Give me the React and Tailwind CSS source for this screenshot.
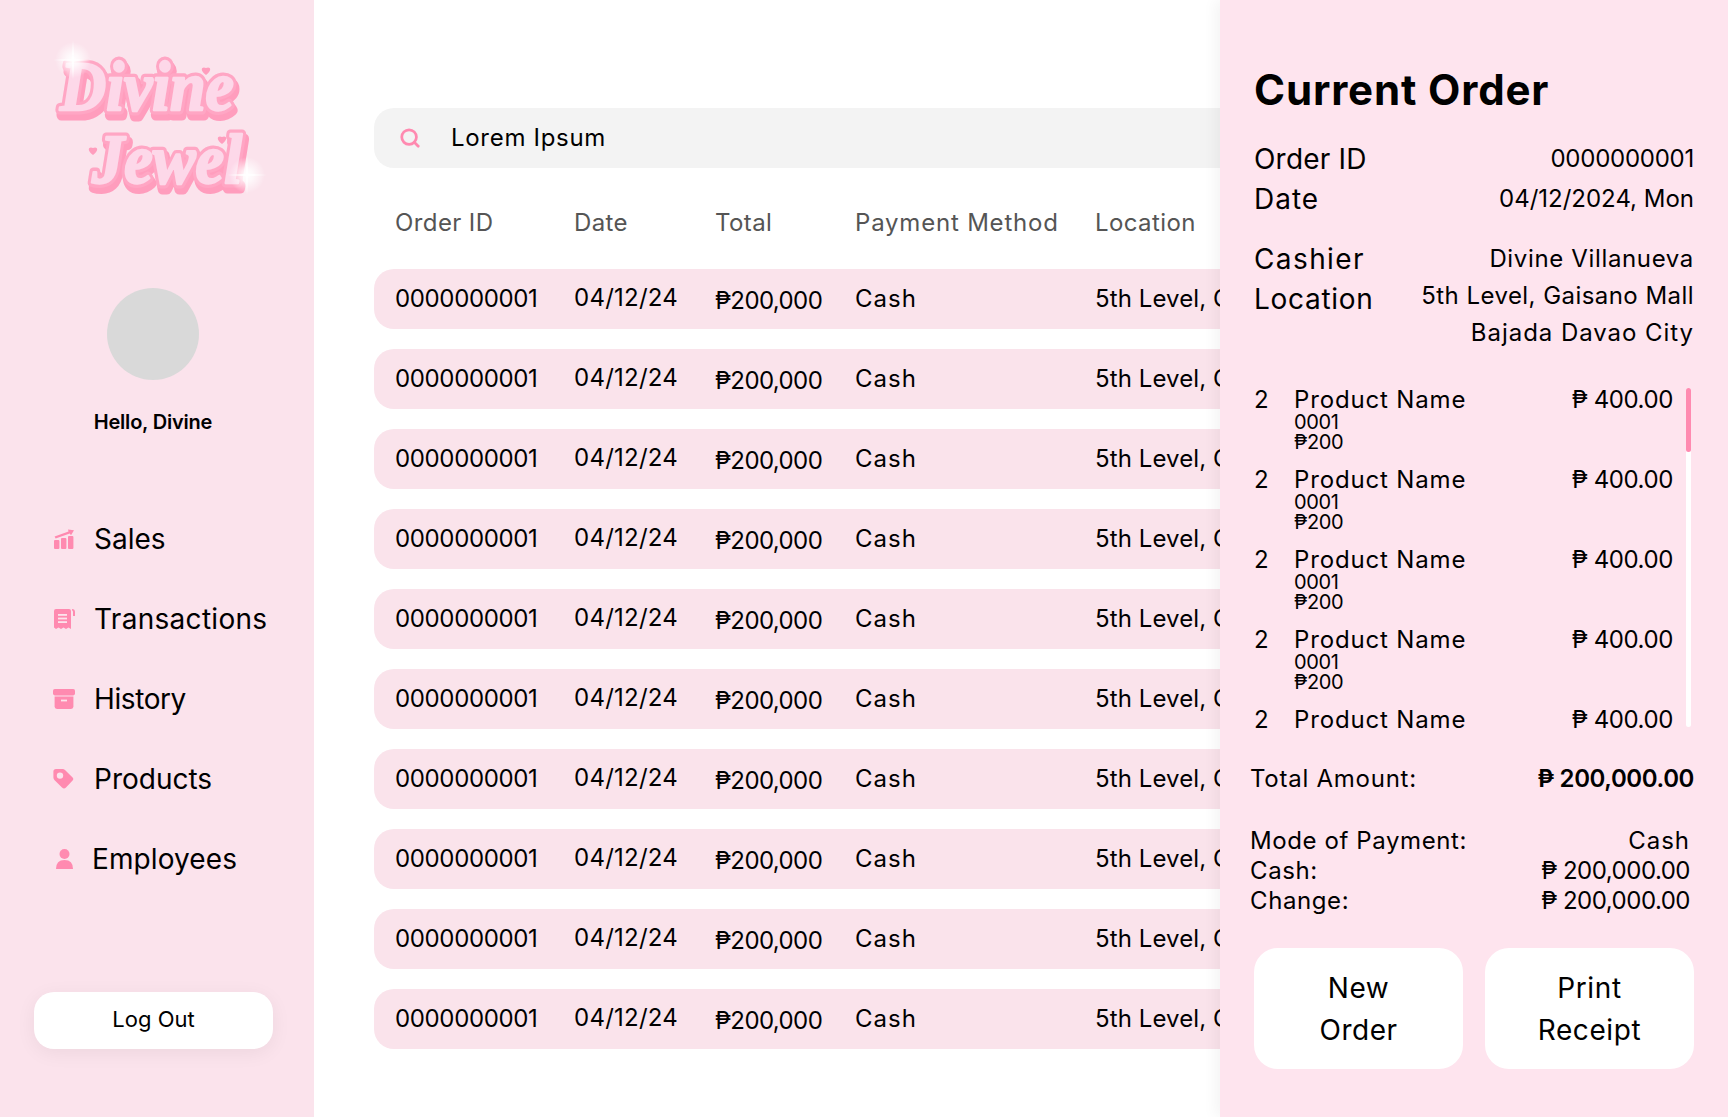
import { Search } from "lucide-react";

const PINK = "#ff8ab0";

function SalesIcon() {
  return (
    <svg width="22" height="20" viewBox="0 0 22 20" fill={PINK}>
      <rect x="1" y="11" width="5.4" height="9" rx="1" />
      <rect x="8" y="9" width="5.4" height="11" rx="1" />
      <rect x="15" y="7" width="5.4" height="13" rx="1" />
      <path d="M1.6 7.6 L15.5 2.6 L15 0.4 L21 1.2 L18 6.2 L16.8 4.4 L2.6 9.6 Z" />
    </svg>
  );
}

function ReceiptIcon() {
  return (
    <svg width="22" height="20" viewBox="0 0 22 20" fill={PINK}>
      <path d="M3 0 H16 Q18 0 18 2 V20 L15.5 18.4 L13 20 L10.5 18.4 L8 20 L5.5 18.4 L3 20 L1 18.6 V2 Q1 0 3 0 Z" />
      <path d="M19 0 Q22 0 22 3 V7 H20 V3 Q20 1.6 19 1.6 Z" />
      <rect x="5" y="5" width="9" height="1.8" fill="#fce4ec" />
      <rect x="5" y="8.6" width="9" height="1.8" fill="#fce4ec" />
      <rect x="5" y="12.2" width="9" height="1.8" fill="#fce4ec" />
    </svg>
  );
}

function ArchiveIcon() {
  return (
    <svg width="22" height="20" viewBox="0 0 22 20" fill={PINK}>
      <rect x="0" y="0" width="22" height="6.4" rx="1.8" />
      <path d="M1.6 7.6 H20.4 V17.6 Q20.4 20 18 20 H4 Q1.6 20 1.6 17.6 Z" />
      <rect x="8" y="10.6" width="6" height="1.8" fill="#fce4ec" />
    </svg>
  );
}

function TagIcon() {
  return (
    <svg width="22" height="20" viewBox="0 0 22 20" fill={PINK}>
      <path
        fillRule="evenodd"
        d="M3 0 H9.6 Q11 0 12 1 L19.6 8.4 Q21 10 19.6 11.6 L13 18.6 Q11 20.4 9 18.6 L1.4 11 Q0.4 10 0.4 8.6 V2.6 Q0.4 0 3 0 Z M7 3.4 A3.2 3.2 0 1 0 7 9.8 A3.2 3.2 0 1 0 7 3.4 Z"
      />
    </svg>
  );
}

function UserIcon() {
  return (
    <svg width="22" height="20" viewBox="0 0 22 20" fill={PINK}>
      <circle cx="11.5" cy="5" r="5" />
      <path d="M3 20 Q3 11 11.5 11 Q20 11 20 20 Z" />
    </svg>
  );
}

function Logo() {
  const word = (text, x, y, len) => (
    <g fontFamily="'Liberation Serif', serif" fontStyle="italic" fontWeight="700" fontSize="70">
      <text x={x + 2} y={y + 5} textLength={len} lengthAdjust="spacingAndGlyphs" fill="#ff9dbd" stroke="#ff9dbd" strokeWidth="11" strokeLinejoin="round">
        {text}
      </text>
      <text x={x} y={y} textLength={len} lengthAdjust="spacingAndGlyphs" fill="#ffa6c4" stroke="#ffa6c4" strokeWidth="9" strokeLinejoin="round">
        {text}
      </text>
      <text x={x} y={y} textLength={len} lengthAdjust="spacingAndGlyphs" fill="#fdd8e9" stroke="#fdd8e9" strokeWidth="2.4" strokeLinejoin="round">
        {text}
      </text>
    </g>
  );
  const heart = (x, y) => (
    <path
      d={`M${x} ${y + 5} C${x - 7} ${y} ${x - 4} ${y - 4} ${x} ${y - 2} C${x + 4} ${y - 4} ${x + 7} ${y} ${x} ${y + 5} Z`}
      fill="#ff9dbd"
    />
  );
  const spark = (x, y) => (
    <g>
      <circle cx={x} cy={y} r="18" fill="url(#glow)" />
      <path d={`M${x} ${y - 20} L${x + 1.2} ${y - 1.2} L${x + 20} ${y} L${x + 1.2} ${y + 1.2} L${x} ${y + 20} L${x - 1.2} ${y + 1.2} L${x - 20} ${y} L${x - 1.2} ${y - 1.2} Z`} fill="#fff" opacity="0.8" />
    </g>
  );
  return (
    <svg width="240" height="170" viewBox="0 0 240 170">
      <defs>
        <radialGradient id="glow">
          <stop offset="0%" stopColor="#fff" />
          <stop offset="35%" stopColor="#fff" stopOpacity="0.75" />
          <stop offset="100%" stopColor="#fff" stopOpacity="0" />
        </radialGradient>
      </defs>
      {word("Divine", 30, 80, 174)}
      {word("Jewel", 62, 153, 150)}
      {heart(176, 40)}
      {heart(192, 109)}
      {heart(63, 120)}
      {spark(43, 30)}
      {spark(217, 145)}
    </svg>
  );
}

const navItems = [
  { label: "Sales", icon: <SalesIcon />, cls: "" },
  { label: "Transactions", icon: <ReceiptIcon />, cls: "tracking-[0.3px]" },
  { label: "History", icon: <ArchiveIcon />, cls: "tracking-[-0.4px]" },
  { label: "Products", icon: <TagIcon />, cls: "" },
  { label: "Employees", icon: <UserIcon />, cls: "-ml-0.5 tracking-[0.1px]" },
];

const rows = Array.from({ length: 10 }, (_, i) => i);
const products = [0, 1, 2, 3, 4];

function Sidebar() {
  return (
    <div className="w-[314px] shrink-0 h-full bg-[#fbe3ec] flex flex-col">
      <div className="pt-[30px] pl-[30px] h-[200px]">
        <Logo />
      </div>
      <div className="w-[306px] mt-[88px] flex flex-col items-center">
        <div className="w-[92px] h-[92px] rounded-full bg-[#d9d9d9]" />
        <p className="mt-[27px] text-[20px] leading-[30px] font-semibold text-black tracking-[-0.2px]">Hello, Divine</p>
      </div>
      <nav className="mt-[82px] pl-[53px] flex flex-col gap-[40px]">
        {navItems.map((item) => (
          <div key={item.label} className="flex items-center gap-[19px] h-[40px]">
            {item.icon}
            <span className={`text-[28px] leading-[40px] text-black ${item.cls}`}>{item.label}</span>
          </div>
        ))}
      </nav>
      <button className="mt-auto mb-[68px] ml-[34px] w-[239px] h-[57px] pb-[2px] rounded-[20px] bg-white text-[22px] text-black shadow-[0_4px_20px_rgba(0,0,0,0.06)]">
        Log Out
      </button>
    </div>
  );
}

function Transactions() {
  return (
    <div className="flex-1 min-w-0 h-full bg-white overflow-hidden pl-[60px] pt-[108px]">
      <div className="w-[1000px] h-[60px] rounded-[20px] bg-[#f3f3f3] flex items-center pl-[25px] gap-[30px]">
        <Search size={22} strokeWidth={3} color={PINK} />
        <span className="text-[24px] text-black tracking-[0.7px]">Lorem Ipsum</span>
      </div>
      <div className="w-[1000px] mt-[35px] h-[40px] pl-[21px] flex items-center text-[24px] text-[#555555] tracking-[0.4px]">
        <span className="w-[179px]">Order ID</span>
        <span className="w-[141px]">Date</span>
        <span className="w-[140px]">Total</span>
        <span className="w-[240px] tracking-[0.8px]">Payment Method</span>
        <span>Location</span>
      </div>
      <div className="mt-[26px] flex flex-col gap-[20px]">
        {rows.map((r) => (
          <div key={r} className="w-[1000px] h-[60px] rounded-[20px] bg-[#fae3eb] pl-[21px] flex items-center text-[24px] text-black whitespace-nowrap">
            <span className="w-[179px] tracking-[-0.35px]">0000000001</span>
            <span className="w-[141px] pb-[2px] tracking-[0.25px]">04/12/24</span>
            <span className="w-[140px] pt-[3px] tracking-[-0.6px]">₱200,000</span>
            <span className="w-[240px] tracking-[1px]">Cash</span>
            <span className="tracking-[0.1px]">5th Level, Gaisano Mall</span>
          </div>
        ))}
      </div>
    </div>
  );
}

function OrderPanel() {
  return (
    <div className="relative w-[508px] shrink-0 h-full bg-[#fee4ee] shadow-[-4px_0_14px_rgba(0,0,0,0.05)] px-[34px] pt-[60px] text-black">
      <h1 className="text-[42px] leading-[60px] font-bold tracking-[0.85px]">Current Order</h1>

      <div className="mt-[19px] flex items-center justify-between h-[40px]">
        <span className="text-[28px] tracking-[0.2px]">Order ID</span>
        <span className="text-[24px] tracking-[-0.25px]">0000000001</span>
      </div>
      <div className="flex items-center justify-between h-[40px]">
        <span className="text-[28px] tracking-[1px]">Date</span>
        <span className="text-[24px]">04/12/2024, Mon</span>
      </div>

      <div className="mt-[20px] flex justify-between">
        <div className="flex flex-col text-[28px] leading-[40px]">
          <span className="tracking-[1.4px]">Cashier</span>
          <span className="tracking-[0.7px]">Location</span>
        </div>
        <div className="text-right text-[24px] leading-[37px] pt-[1px]">
          <p className="tracking-[0.65px]">Divine Villanueva</p>
          <p className="tracking-[0.45px]">5th Level, Gaisano Mall</p>
          <p className="tracking-[0.95px]">Bajada Davao City</p>
        </div>
      </div>

      <div className="mt-[37px] h-[342px] relative overflow-hidden">
        <div className="pr-[21px] flex flex-col gap-[16px]">
          {products.map((p) => (
            <div key={p} className="flex">
              <span className="w-[40px] text-[24px] leading-[24px]">2</span>
              <div className="flex-1">
                <p className="text-[24px] leading-[24px] tracking-[0.85px]">Product Name</p>
                <p className="text-[20px] leading-[20px] tracking-[-0.4px]">0001</p>
                <p className="text-[20px] leading-[20px] tracking-[-0.4px]">₱200</p>
              </div>
              <span className="text-[24px] leading-[24px] tracking-[-0.4px]">₱ 400.00</span>
            </div>
          ))}
        </div>
        <div className="absolute right-[3px] top-0 h-[339px] w-[5px] rounded-full bg-white">
          <div className="w-full h-[64px] rounded-full bg-[#ff8ab0]" />
        </div>
      </div>

      <div className="mt-[34px] -ml-[4px] flex items-center justify-between text-[24px] leading-[30px]">
        <span className="tracking-[0.75px]">Total Amount:</span>
        <span className="font-semibold tracking-[-0.4px]">₱ 200,000.00</span>
      </div>

      <div className="mt-[32px] -ml-[4px] mr-[4px] flex flex-col text-[24px] leading-[30px]">
        <div className="flex justify-between"><span className="tracking-[0.6px]">Mode of Payment:</span><span className="tracking-[1px]">Cash</span></div>
        <div className="flex justify-between"><span className="tracking-[0.6px]">Cash:</span><span className="tracking-[-0.5px]">₱ 200,000.00</span></div>
        <div className="flex justify-between"><span className="tracking-[0.6px]">Change:</span><span className="tracking-[-0.5px]">₱ 200,000.00</span></div>
      </div>

      <div className="mt-[32px] flex gap-[22px]">
        <button className="flex-1 h-[121px] rounded-[24px] bg-white text-[28px] leading-[42px] tracking-[0.5px]">New<br />Order</button>
        <button className="flex-1 h-[121px] rounded-[24px] bg-white text-[28px] leading-[42px] tracking-[0.6px]">Print<br />Receipt</button>
      </div>
    </div>
  );
}

export default function App() {
  return (
    <div className="w-full h-screen flex overflow-hidden font-['Inter','Noto_Sans',sans-serif]">
      <Sidebar />
      <Transactions />
      <OrderPanel />
    </div>
  );
}
